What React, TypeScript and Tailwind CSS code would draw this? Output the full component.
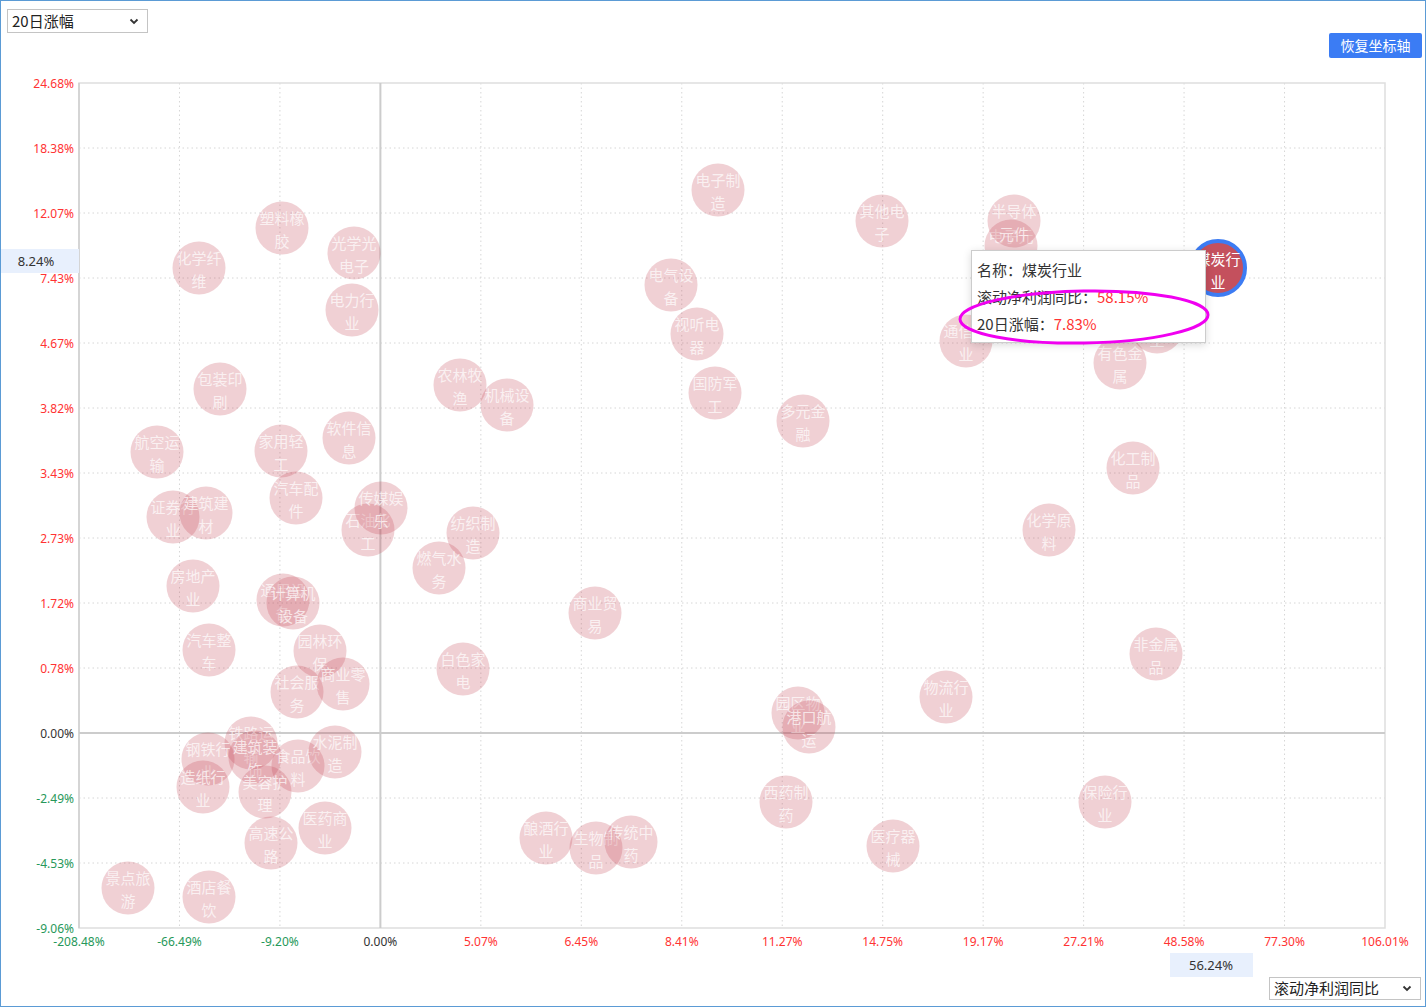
import React from 'react';

type Bubble = { n: string; x: number; y: number };

const bubbles: Bubble[] = [
  { n: '电子制造', x: 718, y: 190 },
  { n: '其他电子', x: 882, y: 221 },
  { n: '电子元件', x: 1011, y: 246 },
  { n: '半导体元件', x: 1014, y: 221 },
  { n: '化学纤维', x: 199, y: 268 },
  { n: '塑料橡胶', x: 282, y: 228 },
  { n: '光学光电子', x: 354, y: 253 },
  { n: '电力行业', x: 352, y: 310 },
  { n: '电气设备', x: 671, y: 285 },
  { n: '视听电器', x: 697, y: 334 },
  { n: '通信行业', x: 966, y: 341 },
  { n: '有色金属', x: 1120, y: 363 },
  { n: '基础化工', x: 1157, y: 327 },
  { n: '包装印刷', x: 220, y: 389 },
  { n: '农林牧渔', x: 460, y: 385 },
  { n: '机械设备', x: 507, y: 405 },
  { n: '国防军工', x: 715, y: 393 },
  { n: '多元金融', x: 803, y: 421 },
  { n: '航空运输', x: 157, y: 452 },
  { n: '家用轻工', x: 281, y: 451 },
  { n: '软件信息', x: 349, y: 438 },
  { n: '汽车配件', x: 296, y: 498 },
  { n: '石油化工', x: 368, y: 530 },
  { n: '传媒娱乐', x: 381, y: 508 },
  { n: '证券行业', x: 173, y: 517 },
  { n: '建筑建材', x: 206, y: 513 },
  { n: '纺织制造', x: 473, y: 533 },
  { n: '燃气水务', x: 439, y: 568 },
  { n: '化工制品', x: 1133, y: 468 },
  { n: '化学原料', x: 1049, y: 530 },
  { n: '房地产业', x: 193, y: 586 },
  { n: '通用设备', x: 283, y: 600 },
  { n: '计算机设备', x: 293, y: 603 },
  { n: '商业贸易', x: 595, y: 613 },
  { n: '汽车整车', x: 209, y: 650 },
  { n: '园林环保', x: 320, y: 651 },
  { n: '白色家电', x: 463, y: 669 },
  { n: '社会服务', x: 297, y: 692 },
  { n: '商业零售', x: 343, y: 684 },
  { n: '非金属品', x: 1156, y: 654 },
  { n: '物流行业', x: 946, y: 697 },
  { n: '园区物业', x: 798, y: 713 },
  { n: '港口航运', x: 809, y: 727 },
  { n: '铁路运输', x: 251, y: 743 },
  { n: '建筑装饰', x: 255, y: 757 },
  { n: '钢铁行业', x: 208, y: 759 },
  { n: '食品饮料', x: 298, y: 766 },
  { n: '水泥制造', x: 335, y: 752 },
  { n: '造纸行业', x: 203, y: 787 },
  { n: '美容护理', x: 265, y: 792 },
  { n: '西药制药', x: 786, y: 802 },
  { n: '保险行业', x: 1105, y: 802 },
  { n: '高速公路', x: 271, y: 843 },
  { n: '医药商业', x: 325, y: 828 },
  { n: '酿酒行业', x: 546, y: 838 },
  { n: '生物制品', x: 596, y: 848 },
  { n: '传统中药', x: 631, y: 842 },
  { n: '医疗器械', x: 893, y: 846 },
  { n: '景点旅游', x: 128, y: 888 },
  { n: '酒店餐饮', x: 209, y: 897 },
];

const xLabels = ['-208.48%', '-66.49%', '-9.20%', '0.00%', '5.07%', '6.45%', '8.41%', '11.27%', '14.75%', '19.17%', '27.21%', '48.58%', '77.30%', '106.01%'];
const yLabels = ['24.68%', '18.38%', '12.07%', '7.43%', '4.67%', '3.82%', '3.43%', '2.73%', '1.72%', '0.78%', '0.00%', '-2.49%', '-4.53%', '-9.06%'];

const LEFT = 79;
const RIGHT = 1385;
const TOP = 83;
const BOTTOM = 928;
const STEP_X = (RIGHT - LEFT) / 13;
const STEP_Y = (BOTTOM - TOP) / 13;

const RED = '#ff3333';
const GREEN = '#27985a';
const DARK = '#333333';

const labelColor = (s: string) => (s === '0.00%' ? DARK : s.startsWith('-') ? GREEN : RED);

const CJK = "'Noto Sans CJK SC', sans-serif";
const LATIN = "'Noto Sans', 'Noto Sans CJK SC', sans-serif";

const Chevron = () => (
  <svg width="10" height="7" viewBox="0 0 10 7">
    <path d="M1.5 1.5 L5 5 L8.5 1.5" fill="none" stroke="#333" strokeWidth="1.8" />
  </svg>
);

const Select = ({ label, className }: { label: string; className: string }) => (
  <div className={`flex items-center justify-between border border-[#c4c4c4] bg-white pl-[4px] pr-[8px] text-[15px] text-[#222] ${className}`}>
    <span>{label}</span>
    <Chevron />
  </div>
);

const Chart = () => (
  <svg viewBox="1 60 1424 917" width={1424} height={917} className="block">
    {/* grid */}
    {Array.from({ length: 12 }, (_, i) => i + 1)
      .filter((i) => i !== 3)
      .map((i) => (
        <line key={`gx${i}`} x1={LEFT + i * STEP_X} x2={LEFT + i * STEP_X} y1={TOP} y2={BOTTOM} stroke="#d6d6d6" strokeDasharray="1.5 3" />
      ))}
    {Array.from({ length: 12 }, (_, j) => j + 1)
      .filter((j) => j !== 10)
      .map((j) => (
        <line key={`gy${j}`} x1={LEFT} x2={RIGHT} y1={TOP + j * STEP_Y} y2={TOP + j * STEP_Y} stroke="#d6d6d6" strokeDasharray="1.5 3" />
      ))}
    <rect x={LEFT} y={TOP} width={RIGHT - LEFT} height={BOTTOM - TOP} fill="none" stroke="#dedede" strokeWidth="1.5" />
    <line x1={LEFT} x2={LEFT} y1={TOP} y2={BOTTOM} stroke="#cfcfcf" strokeWidth="1.5" />
    <line x1={LEFT + 3 * STEP_X} x2={LEFT + 3 * STEP_X} y1={TOP} y2={BOTTOM} stroke="#cccccc" strokeWidth="2" />
    <line x1={LEFT} x2={RIGHT} y1={TOP + 10 * STEP_Y} y2={TOP + 10 * STEP_Y} stroke="#cccccc" strokeWidth="2" />

    {/* axis labels */}
    {yLabels.map((s, j) => (
      <text key={s} x={74} y={TOP + j * STEP_Y} textAnchor="end" dominantBaseline="central" fontSize="12" fontFamily={LATIN} fill={labelColor(s)}>
        {s}
      </text>
    ))}
    {xLabels.map((s, i) => (
      <text key={s} x={LEFT + i * STEP_X} y={941} textAnchor="middle" dominantBaseline="central" fontSize="12" fontFamily={LATIN} fill={labelColor(s)}>
        {s}
      </text>
    ))}

    {/* bubbles */}
    {bubbles.map((b) => (
      <g key={b.n}>
        <circle cx={b.x} cy={b.y} r={26.5} fill="rgba(195,67,83,0.25)" />
        <text x={b.x} y={b.y - 11} textAnchor="middle" dominantBaseline="central" fontSize="15" fontFamily={CJK} fill="rgba(255,255,255,0.7)">
          {b.n.slice(0, 3)}
        </text>
        <text x={b.x} y={b.y + 12} textAnchor="middle" dominantBaseline="central" fontSize="15" fontFamily={CJK} fill="rgba(255,255,255,0.7)">
          {b.n.slice(3)}
        </text>
      </g>
    ))}

    {/* highlighted */}
    <circle cx={1218} cy={268} r={27} fill="#c4505d" stroke="#3d7cf3" strokeWidth="4" />
    <text x={1218} y={258} textAnchor="middle" dominantBaseline="central" fontSize="15" fontFamily={CJK} fill="#ffffff">
      煤炭行
    </text>
    <text x={1218} y={281} textAnchor="middle" dominantBaseline="central" fontSize="15" fontFamily={CJK} fill="#ffffff">
      业
    </text>

    {/* axis pointer labels */}
    <rect x={1} y={249} width={78} height={24} fill="#e8f0fd" />
    <text x={36} y={261} textAnchor="middle" dominantBaseline="central" fontSize="13" fontFamily={LATIN} fill={DARK}>
      8.24%
    </text>
    <rect x={1170} y={953} width={83} height={24} fill="#e8f0fd" />
    <text x={1211} y={965} textAnchor="middle" dominantBaseline="central" fontSize="13" fontFamily={LATIN} fill={DARK}>
      56.24%
    </text>
  </svg>
);

export default function App() {
  return (
    <div className="relative h-[1007px] w-[1426px] overflow-hidden border border-[#5b9bd5] bg-white" style={{ fontFamily: CJK }}>
      <div className="flex h-[59px] items-start justify-between">
        <Select label="20日涨幅" className="ml-[6px] mt-[8px] h-[24px] w-[141px]" />
        <button className="mr-[3px] mt-[32px] h-[25px] w-[93px] rounded-[2px] bg-[#3b7cf4] text-[14px] text-white">恢复坐标轴</button>
      </div>

      <Chart />

      <div className="flex justify-end">
        <Select label="滚动净利润同比" className="mr-[4px] h-[23px] w-[152px]" />
      </div>

      {/* tooltip */}
      <div className="absolute left-[970px] top-[249px] flex h-[93px] w-[235px] flex-col gap-[6px] border border-[#cccccc] bg-white pl-[5px] pt-[8px] text-[15px] leading-[21px] text-[#333] shadow-[0_2px_8px_rgba(0,0,0,0.15)]">
        <div>名称：煤炭行业</div>
        <div>
          滚动净利润同比：<span className="text-[#ff3333]">58.15%</span>
        </div>
        <div>
          20日涨幅：<span className="text-[#ff3333]">7.83%</span>
        </div>
      </div>

      {/* annotation */}
      <svg className="pointer-events-none absolute left-[940px] top-[270px]" width="300" height="100" viewBox="940 270 300 100">
        <ellipse cx={1083} cy={316} rx={124} ry={26} fill="none" stroke="#f000f0" strokeWidth="3" transform="rotate(-1 1083 316)" />
      </svg>
    </div>
  );
}
